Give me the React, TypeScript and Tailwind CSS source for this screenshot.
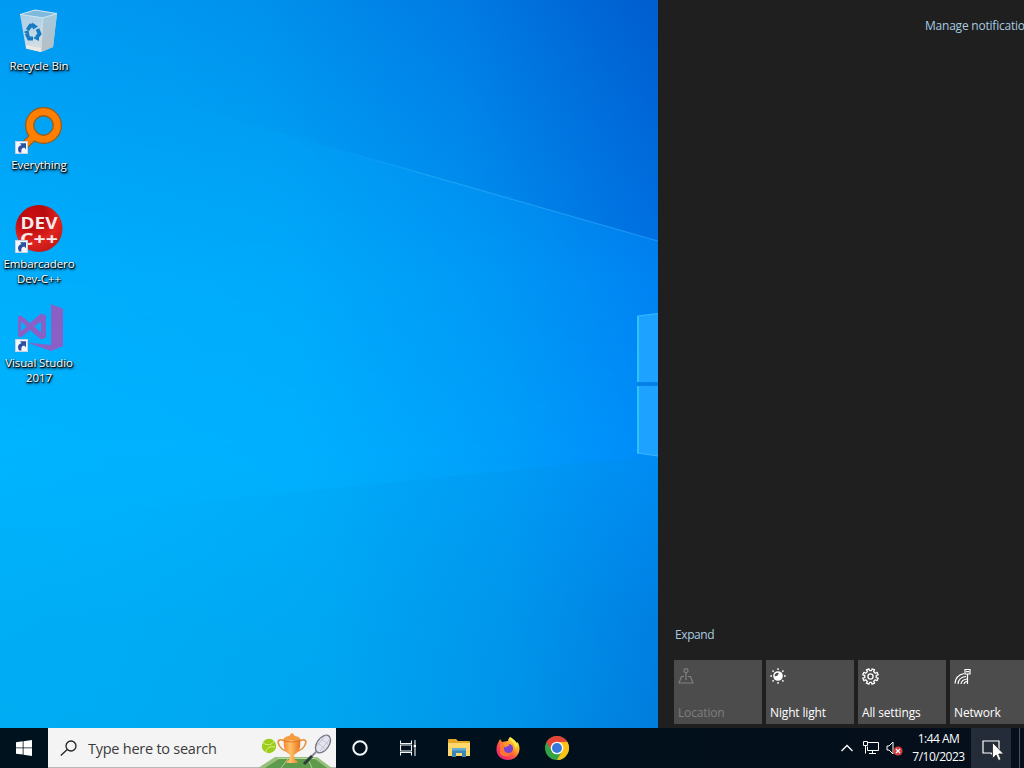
import type { ReactNode } from "react";

interface DesktopIconProps {
  label: string;
  shortcut?: boolean;
  children: ReactNode;
}

function DesktopIcon({ label, shortcut = true, children }: DesktopIconProps) {
  return (
    <div className="flex h-[99px] w-[78px] flex-col items-center pt-[7px]">
      <div className="relative h-12 w-12 shrink-0">
        {children}
        {shortcut && (
          <svg className="absolute bottom-0 left-0 h-[13px] w-[13px]" viewBox="0 0 13 13">
            <rect x=".5" y=".5" width="12" height="12" fill="#f4f7fb" stroke="#c5d3e4" />
            <path d="M4 11.500C2 7.500 3.500 4.800 6.500 4.300L5 2.300H11V8.300L9.200 6.500C6.800 6.800 5.800 8.500 6.500 11.500Z" fill="#2a4f9f" />
          </svg>
        )}
      </div>
      <p className="mt-[3px] w-[76px] text-center text-[11.5px] leading-[15px] tracking-[-0.1px] text-white [text-shadow:1px_1px_1px_#000,0_1px_2px_#000,1px_2px_3px_#000a]">
        {label}
      </p>
    </div>
  );
}

function RecycleBinIcon() {
  return (
    <svg className="h-12 w-12" viewBox="0 0 48 48">
      <defs>
        <linearGradient id="binFront" x1="0" y1="0" x2=".3" y2="1">
          <stop stopColor="#a0cce8" />
          <stop offset="1" stopColor="#d9dee2" />
        </linearGradient>
        <linearGradient id="binSide" x1="0" y1="0" x2="0" y2="1">
          <stop stopColor="#a3c9df" />
          <stop offset="1" stopColor="#b9bec3" />
        </linearGradient>
      </defs>
      <path d="M5 7.500 20 3l22 3.500L38 40 26 45 11 41.500Z" fill="url(#binFront)" />
      <path d="M28 10.500 42 6.500 38 40 26 45Z" fill="url(#binSide)" />
      <path d="M5 7.500 20 3l22 3.500-14 4.300Z" fill="#7fb9db" stroke="#cfe5f1" strokeWidth="1" />
      <path d="M28 11 26 44" stroke="#c8dde9" />
      <path d="m11 38 15 3v4l-15-3.500Z" fill="#ebe8e8" />
      <g fill="none" stroke="#147bc4" strokeWidth="3.800">
        <path d="m12.500 23 3-4.500 4 .5" />
        <path d="m22.500 22 2 5-3 3.500" />
        <path d="M18 31.500h-4l-2.500-5" />
      </g>
      <path d="m17 15.500 6 4-5 3ZM24 28v6l-6-3ZM8.500 25l5-2 .8 5Z" fill="#147bc4" />
    </svg>
  );
}

function EverythingIcon() {
  return (
    <svg className="h-12 w-12" viewBox="0 0 48 48">
      <path d="M19 30 8 41" stroke="#985b18" strokeWidth="8.500" />
      <circle cx="28.500" cy="19.500" r="13.800" fill="none" stroke="#985b18" strokeWidth="9.400" />
      <path d="M20 29 8 41" stroke="#ff8000" strokeWidth="6.200" />
      <circle cx="28.500" cy="19.500" r="13.800" fill="none" stroke="#ff8000" strokeWidth="6.800" />
    </svg>
  );
}

function DevCppIcon() {
  return (
    <svg className="h-12 w-12" viewBox="0 0 48 48">
      <defs>
        <radialGradient id="devRed" cx=".35" cy=".2" r=".9">
          <stop stopColor="#c90d10" />
          <stop offset=".3" stopColor="#b80b0d" />
          <stop offset=".65" stopColor="#e12420" />
          <stop offset="1" stopColor="#bc1714" />
        </radialGradient>
      </defs>
      <circle cx="24" cy="23.500" r="23.500" fill="url(#devRed)" />
      <g fill="#f6e9e9" fontFamily="Open Sans, sans-serif" fontWeight="700" textAnchor="middle">
        <text x="24" y="23.500" fontSize="16.500" textLength="37" lengthAdjust="spacingAndGlyphs">DEV</text>
        <text x="24" y="39.500" fontSize="16.500" textLength="38" lengthAdjust="spacingAndGlyphs">C++</text>
      </g>
    </svg>
  );
}

function VisualStudioIcon() {
  return (
    <svg className="h-12 w-12" viewBox="0 0 48 48">
      <path d="m36 0 12.500 5v37L36 47 12 38.500 36 41Z" fill="#8a5fc6" />
      <path d="m3 12.500 3-1L15 19 26 9.500l5 2v22l-5 2L15 26l-9 7.500-3-1.500Zm3 5v10l5.500-5Zm20 0L19.500 22.500l6.500 6Z" fill="#8a5fc6" />
    </svg>
  );
}

function Wallpaper() {
  return (
    <svg className="absolute inset-0 h-full w-full" viewBox="0 0 658 728" preserveAspectRatio="none">
      <defs>
        <linearGradient id="skyMid">
          <stop stopColor="#00b5ff" />
          <stop offset=".45" stopColor="#00b1ff" />
          <stop offset=".75" stopColor="#00a1fb" />
          <stop offset="1" stopColor="#008cfb" />
        </linearGradient>
        <linearGradient id="skyTop">
          <stop stopColor="#009af2" />
          <stop offset=".4" stopColor="#0093ed" />
          <stop offset=".7" stopColor="#007fe6" />
          <stop offset="1" stopColor="#0062d2" />
        </linearGradient>
        <linearGradient id="skyBottom">
          <stop stopColor="#00acf3" />
          <stop offset=".5" stopColor="#00a8f1" />
          <stop offset=".78" stopColor="#0095eb" />
          <stop offset="1" stopColor="#0076dc" />
        </linearGradient>
        <linearGradient id="fadeDown" x1="0" y1="0" x2="0" y2="1">
          <stop stopColor="#fff" />
          <stop offset=".22" stopColor="#888" />
          <stop offset=".38" stopColor="#3a3a3a" />
          <stop offset=".64" stopColor="#000" />
        </linearGradient>
        <linearGradient id="fadeUp" x1="0" y1="0" x2="0" y2="1">
          <stop offset=".62" stopColor="#000" />
          <stop offset=".85" stopColor="#ccc" />
          <stop offset="1" stopColor="#fff" />
        </linearGradient>
        <linearGradient id="beam">
          <stop offset=".25" stopColor="#2fb8ff" stopOpacity="0" />
          <stop offset=".5" stopColor="#2fb8ff" stopOpacity=".5" />
          <stop offset="1" stopColor="#2fa8ff" stopOpacity=".6" />
        </linearGradient>
        <linearGradient id="shade">
          <stop offset=".25" stopColor="#0060d0" stopOpacity="0" />
          <stop offset=".7" stopColor="#0060d0" stopOpacity=".13" />
          <stop offset="1" stopColor="#0054c8" stopOpacity=".36" />
        </linearGradient>
        <linearGradient id="shadeLow">
          <stop stopColor="#0090e0" stopOpacity="0" />
          <stop offset="1" stopColor="#008ee0" stopOpacity=".28" />
        </linearGradient>
        <mask id="maskTop">
          <rect width="658" height="728" fill="url(#fadeDown)" />
        </mask>
        <mask id="maskBottom">
          <rect width="658" height="728" fill="url(#fadeUp)" />
        </mask>
      </defs>
      <rect width="658" height="728" fill="url(#skyMid)" />
      <rect width="658" height="728" fill="url(#skyTop)" mask="url(#maskTop)" />
      <rect width="658" height="728" fill="url(#skyBottom)" mask="url(#maskBottom)" />
      <path d="M0 40 210 113 658 241V0H0Z" fill="url(#shade)" />
      <path d="M120 510 658 455V728H120Z" fill="url(#shadeLow)" />
      <path d="m210 113 448 128" fill="none" stroke="url(#beam)" strokeWidth="1.200" />
      <path d="m637 316 21-2.500V382h-21ZM637 386h21v70l-21-3Z" fill="#1ea2ff" />
      <path d="M638 316v66M638 386v67" stroke="#2cc4fd" strokeWidth="2" />
      <path d="m637 316 21-2.500M637 453l21 3" stroke="#3cb6ff" />
      <path d="M637 384h21" stroke="#087fe0" strokeWidth="3" />
    </svg>
  );
}

function LocationIcon() {
  return (
    <svg className="h-4 w-4" viewBox="0 0 16 16" fill="none" stroke="currentColor" strokeWidth="1.200">
      <circle cx="8" cy="2.700" r="2" />
      <path d="M8 4.700V12M6 8.500H3.500L1 15h14l-2.500-6.500H10" />
    </svg>
  );
}

function NightLightIcon() {
  return (
    <svg className="h-4 w-4" viewBox="0 0 16 16">
      <circle cx="8" cy="8" r="4.800" fill="currentColor" />
      <path d="M4.700 8.200C4.500 6 6 4.500 8.500 4.700 8.800 7 7 8.500 4.700 8.200Z" fill="#4c4c4c" />
      <path
        d="M8 .3V2M8 14v1.700M.3 8H2M14 8h1.700M2.500 2.500l1.200 1.200M12.300 12.300l1.200 1.200M2.500 13.500l1.200-1.200M12.300 3.700l1.200-1.200"
        stroke="currentColor"
        strokeWidth="1.400"
      />
    </svg>
  );
}

function GearIcon() {
  return (
    <svg className="h-[17px] w-[17px]" viewBox="0 0 17 17" fill="none" stroke="currentColor" strokeWidth="1.300" strokeLinejoin="round">
      <path d="m7 .8.5 1.900h2L10 .8l2.600 1.100-1 1.700 1.700 1.700 1.800-1 1.100 2.500-2 .6v2.200l2 .5-1.100 2.600-1.800-1-1.700 1.700 1 1.700-2.600 1.100-.5-1.900h-2L7 16.200l-2.600-1.100 1-1.700-1.700-1.700-1.800 1-1.100-2.600 2-.5V7.400l-2-.6 1.100-2.500 1.800 1 1.700-1.700-1-1.700Z" />
      <circle cx="8.500" cy="8.500" r="2.600" />
    </svg>
  );
}

function NetworkTileIcon() {
  return (
    <svg className="h-[17px] w-[17px]" viewBox="0 0 17 17" fill="none" stroke="currentColor" strokeWidth="1.200">
      <path d="M1 15.500C1.500 9.500 5 6.500 10 5.500M4 16c.3-4.500 3-7 8-7.500M7 16c.2-3 2-4.500 6-5M10 16c.2-1.500 1-2.200 3-2.500" />
      <path d="M11 1.500h5v4.500h-5ZM13.500 6v10M12 3.700h3" />
    </svg>
  );
}

const quickActions = [
  { label: "Location", icon: <LocationIcon />, disabled: true },
  { label: "Night light", icon: <NightLightIcon /> },
  { label: "All settings", icon: <GearIcon /> },
  { label: "Network", icon: <NetworkTileIcon /> },
];

function ActionCenter() {
  return (
    <aside className="relative flex w-[366px] shrink-0 flex-col overflow-hidden bg-[#1f1f1f] pl-4 text-[12px] text-[#a9cbe0]">
      <button type="button" className="ml-[251px] mt-[18px] w-max whitespace-nowrap text-left leading-4 tracking-[-0.22px]">
        Manage notifications
      </button>
      <button type="button" className="mt-auto w-max pl-[1px] text-left leading-4 tracking-[-0.4px]">
        Expand
      </button>
      <div className="mb-1 mt-[17px] flex w-max gap-1">
        {quickActions.map(({ label, icon, disabled }) => (
          <button
            key={label}
            type="button"
            disabled={disabled}
            className={`flex h-16 w-[88px] flex-col items-start justify-between bg-[#4c4c4c] pb-[3px] pl-1 pt-2 leading-4 tracking-[-0.15px] ${
              disabled ? "text-[#7f7f7f]" : "text-white"
            }`}
          >
            {icon}
            <span>{label}</span>
          </button>
        ))}
      </div>
    </aside>
  );
}

function SportsArt() {
  return (
    <svg className="h-10 w-20" viewBox="0 0 80 40">
      <defs>
        <linearGradient id="cup">
          <stop stopColor="#f28a2e" />
          <stop offset=".4" stopColor="#ffc06b" />
          <stop offset="1" stopColor="#e87318" />
        </linearGradient>
      </defs>
      <path d="M19 29h42l15 11H2Z" fill="#98bf7b" />
      <path d="M23 31h36l12 9H9Z" fill="#5c9a4c" />
      <path d="M22 30.500h38M32 31l-7 9M52 31l4 9" stroke="#c1dca9" strokeWidth=".8" />
      <circle cx="13" cy="18" r="7.200" fill="#9ccd19" />
      <path d="M7 15c5 3 9 2 11-2M10 24c0-4 4-6 9-5" fill="none" stroke="#dff096" strokeWidth="1" />
      <path d="M28 13c-5-3-7 0-5 4s4 5 7 6M44 13c5-3 7 0 5 4s-4 5-7 6" fill="none" stroke="#e8903d" strokeWidth="1.600" />
      <path d="M28 12h16c1 8-1 12-6 15l1 5 2.500 1v2h-11v-2l2.500-1 1-5c-5-3-7-7-6-15Z" fill="url(#cup)" />
      <path d="M27 12c1-3 4-3.500 7-4.500 0-3 4-3 4 0 3 1 6 1.500 7 4.500Z" fill="#f59b40" />
      <path d="M28 13q8 2 16 0" fill="none" stroke="#dc7d28" strokeWidth="1" />
      <path d="m60 24-5 5" stroke="#8a8794" strokeWidth="1.800" />
      <path d="m56 28-8 8" stroke="#303a3c" strokeWidth="3" />
      <ellipse cx="67" cy="16" rx="6" ry="10" fill="#e3e4ec" stroke="#77768c" strokeWidth="1.400" transform="rotate(35 67 16)" />
      <path d="m61 14 9 8M64 10l9 7M60 19l10-12M64 23l10-12" stroke="#b5b5c6" strokeWidth=".7" />
    </svg>
  );
}

function ExplorerIcon() {
  return (
    <svg className="h-5 w-[22px]" viewBox="0 0 22 20">
      <path d="M0 2q0-1 1-1h7l2 2h11q1 0 1 1v14H0Z" fill="#e5a82b" />
      <path d="M0 5h22v13H0Z" fill="#ffd76b" />
      <path d="M4 10h14v9h-4v-4H8v4H4Z" fill="#3988b7" />
      <path d="M4 10h14v2.500H4Z" fill="#64acd1" />
    </svg>
  );
}

function FirefoxIcon() {
  return (
    <svg className="h-6 w-6" viewBox="0 0 24 24">
      <defs>
        <linearGradient id="fox" x1=".9" y1=".1" x2=".2" y2=".9">
          <stop stopColor="#fff044" />
          <stop offset=".35" stopColor="#ffa828" />
          <stop offset=".65" stopColor="#ff5045" />
          <stop offset="1" stopColor="#ec2575" />
        </linearGradient>
      </defs>
      <path d="M2 7 4 3l2 3 3-.5c1 0 2-.5 3-.5 0-2 1-3 2-4 1 1 2 2 3 2.700C19 5 20 6 20.500 7.500L21.500 6c2 3 2.500 7 1.500 10-1.500 5-6 8-11 8C5 24 0 19 .5 13c0-2.500.5-4 1.500-6Z" fill="url(#fox)" />
      <path d="M13 3.500c4 2 6 5 6.500 9l2-4C20.500 5 17 3 14.500 1Z" fill="#ffe94b" />
      <path d="M4 7.500c3-1.500 5 .5 8 1-1 2-4 2-4 5 1 4 7 5 10 1-1 6-10 8-14 3Z" fill="#ff7333" />
      <circle cx="12.500" cy="12.500" r="4.600" fill="#7843d0" />
      <path d="M7 7.500c2-1 5-.5 6.500 1.500-1 1.500-3 1-4 2.500-1-.5-2.500-2-2.500-4Z" fill="#ff9330" />
    </svg>
  );
}

function ChromeIcon() {
  return (
    <svg className="h-6 w-6" viewBox="0 0 24 24">
      <circle cx="12" cy="12" r="12" fill="#34a348" />
      <path d="M1.600 6 7 15l5-9h10.400A12 12 0 0 0 1.600 6Z" fill="#e44335" />
      <path d="M22.400 6A12 12 0 0 1 12 24l5.200-9L12 6Z" fill="#fbc116" />
      <circle cx="12" cy="12" r="6.300" fill="#fff" />
      <circle cx="12" cy="12" r="5" fill="#3678dc" />
    </svg>
  );
}

function SystemTray() {
  return (
    <div className="ml-auto flex items-center text-white">
      <svg className="h-2 w-3" viewBox="0 0 12 8" fill="none" stroke="currentColor" strokeWidth="1.300">
        <path d="m.5 7 5.500-5.500L11.500 7" />
      </svg>
      <svg className="ml-[10px] h-4 w-4" viewBox="0 0 16 16" fill="none" stroke="currentColor">
        <path d="M4.500 2.500h11v8h-11v-4M.5 1.500h4v4h-4ZM2.500 5.500v8M9.500 10.500v3M6 13.500h7" />
      </svg>
      <svg className="ml-[7px] h-4 w-[18px]" viewBox="0 0 18 16">
        <path d="M1 6h2l4-4v12l-4-4H1Z" fill="none" stroke="currentColor" />
        <circle cx="12" cy="11" r="4.600" fill="#d83b40" />
        <path d="m10 9 4 4m0-4-4 4" stroke="currentColor" strokeWidth="1.200" />
      </svg>
      <div className="ml-[6px] w-[57px] whitespace-nowrap text-center text-[12px] leading-[18px] tracking-[-0.5px]">
        <p>1:44 AM</p>
        <p>7/10/2023</p>
      </div>
      <button type="button" className="relative ml-1 flex h-10 w-[40px] items-center justify-center bg-[#242c39]">
        <svg className="h-[18px] w-[18px]" viewBox="0 0 18 18" fill="none" stroke="currentColor" strokeWidth="1.200">
          <path d="M1 2h16v12h-5v3l-3-3H1Z" />
        </svg>
        <svg className="absolute left-[21px] top-[14px] h-5 w-3" viewBox="0 0 12 20">
          <path d="M.5.5v16l3.700-3.500 2.300 5.500 2.500-1-2.300-5.500h5Z" fill="#fff" stroke="#222" strokeWidth=".8" />
        </svg>
      </button>
      <span className="ml-2 mr-[4px] h-10 w-px bg-[#4b545e]" />
    </div>
  );
}

function Taskbar() {
  return (
    <footer className="flex h-10 shrink-0 items-center bg-linear-to-r from-[#00121e] via-[#00101c] to-[#060f1b]">
      <button type="button" className="flex h-10 w-12 items-center justify-center">
        <svg className="h-4 w-4" viewBox="0 0 16 16" fill="#fff">
          <path d="m0 2.200 6.700-.9v6.200H0ZM7.500 1.200 16 0v7.500H7.500ZM0 8.300h6.700v6.300L0 13.800ZM7.500 8.300H16V16l-8.500-1.200Z" />
        </svg>
      </button>
      <div className="flex h-10 w-72 items-center border-b border-[#b4b9bb] bg-[#f4f4f4] pl-3">
        <svg className="h-4 w-[17px]" viewBox="0 0 17 16" fill="none" stroke="#222" strokeWidth="1.300">
          <circle cx="11" cy="6" r="5" />
          <path d="m7.300 9.500-6.500 6" />
        </svg>
        <span className="ml-[11px] mt-[2px] whitespace-nowrap text-[14.5px] tracking-[-0.25px] text-[#3b3b3b]">Type here to search</span>
        <div className="ml-auto"><SportsArt /></div>
      </div>
      <div className="flex h-10 w-12 items-center justify-center">
        <svg className="h-4 w-4" viewBox="0 0 16 16">
          <circle cx="8" cy="8" r="6.700" fill="none" stroke="#f4f8fa" strokeWidth="2" />
        </svg>
      </div>
      <div className="flex h-10 w-12 items-center justify-center">
        <svg className="h-4 w-4" viewBox="0 0 16 16" fill="none" stroke="#f0f4f6" strokeWidth="1.100">
          <path d="M.5.500V3.500H11.500V.5M.5 15.500v-3h11v3M.5 5h11v6H.5ZM15 0v4M15 8v8" />
          <path d="M13.700 4.500h2.600v3h-2.600Z" fill="#fff" stroke="none" />
        </svg>
      </div>
      <div className="ml-4 flex items-center gap-[25.5px]">
        <ExplorerIcon />
        <FirefoxIcon />
        <ChromeIcon />
      </div>
      <SystemTray />
    </footer>
  );
}

export default function App() {
  return (
    <div className="flex h-[768px] w-[1024px] flex-col overflow-hidden bg-[#00101c] font-['Open_Sans','Noto_Sans',sans-serif]">
      <div className="flex min-h-0 flex-1">
        <main className="relative w-[658px] shrink-0 overflow-hidden">
          <Wallpaper />
          <div className="relative flex flex-col">
            <DesktopIcon label="Recycle Bin" shortcut={false}>
              <RecycleBinIcon />
            </DesktopIcon>
            <DesktopIcon label="Everything">
              <EverythingIcon />
            </DesktopIcon>
            <DesktopIcon label="Embarcadero Dev-C++">
              <DevCppIcon />
            </DesktopIcon>
            <DesktopIcon label="Visual Studio 2017">
              <VisualStudioIcon />
            </DesktopIcon>
          </div>
        </main>
        <ActionCenter />
      </div>
      <Taskbar />
    </div>
  );
}
